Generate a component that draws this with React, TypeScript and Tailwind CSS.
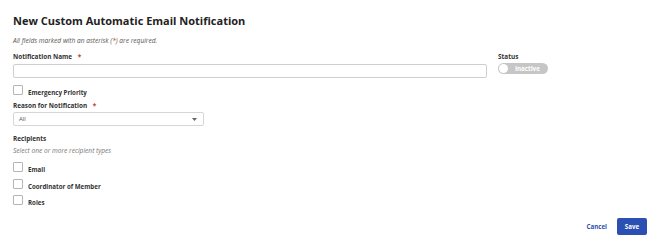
import React from "react";

function Box() {
  return <span className="block w-[10px] h-[10px] rounded-[1px] border border-[#b5b5b5] bg-white shrink-0" />;
}

function CheckRow({ label, className = "" }: { label: string; className?: string }) {
  return (
    <label className={`flex items-end gap-[5px] ${className}`}>
      <Box />
      <span className="text-[6.2px] leading-[8px] font-bold text-[#333] translate-y-[2px]">{label}</span>
    </label>
  );
}

export default function App() {
  return (
    <div className="w-[666px] h-[252px] bg-white pl-[13px] pt-[13px] font-['Open_Sans',sans-serif] text-[#333]">
      <h1 className="text-[11px] leading-[16px] font-bold text-[#222]">New Custom Automatic Email Notification</h1>
      <p className="mt-[8px] text-[6.6px] leading-[8px] italic text-[#555]">
        All fields marked with an asterisk (<span className="text-[#c0392b]">*</span>) are required.
      </p>

      <div className="flex mt-[8px] gap-[11px]">
        <div className="w-[474px]">
          <div className="text-[6.4px] leading-[8px] font-bold">
            Notification Name <span className="ml-[4px] text-[#c0392b]">*</span>
          </div>
          <input className="mt-[3px] block w-full h-[14px] border border-[#cfcfcf] rounded-[2px] bg-white" />
          <CheckRow label="Emergency Priority" className="mt-[7px]" />
          <div className="mt-[7px] text-[6.4px] leading-[8px] font-bold">
            Reason for Notification <span className="ml-[4px] text-[#c0392b]">*</span>
          </div>
          <div className="mt-[2px] w-[191px] h-[14px] border border-[#d6d6d6] rounded-[2px] flex items-center justify-between pl-[5px] pr-[6px]">
            <span className="text-[6px] leading-[8px] text-[#555]">All</span>
            <svg width="5" height="3" viewBox="0 0 5 3"><path d="M0 0h5L2.5 3z" fill="#666" /></svg>
          </div>
        </div>
        <div>
          <div className="text-[6.4px] leading-[8px] font-bold">Status</div>
          <div className="mt-[2px] w-[50px] h-[11px] rounded-full bg-[#c6c6c6] flex items-center pl-[1px] gap-[7px]">
            <span className="w-[9px] h-[9px] rounded-full bg-white" />
            <span className="text-[6.2px] leading-[8px] font-bold text-white">Inactive</span>
          </div>
        </div>
      </div>

      <div className="mt-[9px] text-[6.4px] leading-[8px] font-bold">Recipients</div>
      <p className="mt-[4px] text-[6.6px] leading-[8px] italic text-[#777]">Select one or more recipient types</p>
      <CheckRow label="Email" className="mt-[7px]" />
      <CheckRow label="Coordinator of Member" className="mt-[7px]" />
      <CheckRow label="Roles" className="mt-[6px]" />

      <div className="mt-[13px] flex justify-end items-center gap-[10px] pr-[19px]">
        <button className="text-[6.2px] font-bold text-[#2d50b0]">Cancel</button>
        <button className="w-[30px] h-[17px] rounded-[2px] bg-[#2b4fb2] text-white text-[6.2px] font-bold">Save</button>
      </div>
    </div>
  );
}
